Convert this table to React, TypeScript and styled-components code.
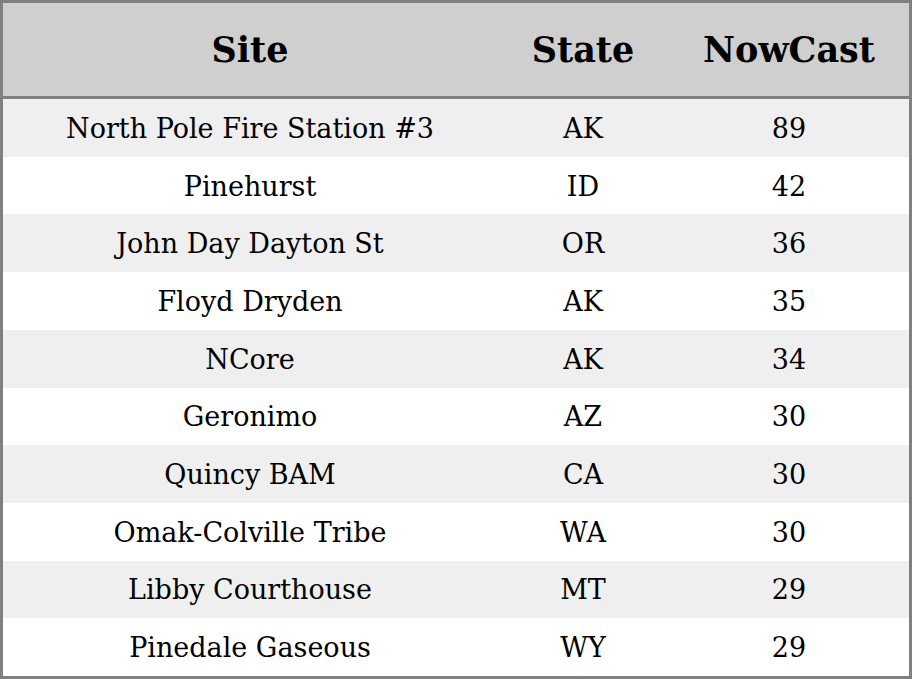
import React from "react";
import styled, { createGlobalStyle } from "styled-components";

const GlobalStyle = createGlobalStyle`
  html, body { margin: 0; padding: 0; background: #fff; }
  * { box-sizing: border-box; }
`;

const rows = [
  { site: "North Pole Fire Station #3", state: "AK", nowcast: 89 },
  { site: "Pinehurst", state: "ID", nowcast: 42 },
  { site: "John Day Dayton St", state: "OR", nowcast: 36 },
  { site: "Floyd Dryden", state: "AK", nowcast: 35 },
  { site: "NCore", state: "AK", nowcast: 34 },
  { site: "Geronimo", state: "AZ", nowcast: 30 },
  { site: "Quincy BAM", state: "CA", nowcast: 30 },
  { site: "Omak-Colville Tribe", state: "WA", nowcast: 30 },
  { site: "Libby Courthouse", state: "MT", nowcast: 29 },
  { site: "Pinedale Gaseous", state: "WY", nowcast: 29 },
];

const Frame = styled.div`
  width: 912px;
  height: 679px;
  border: 3px solid #808080;
  display: flex;
  flex-direction: column;
  font-family: "DejaVu Serif", serif;
  color: #000;
`;

const Row = styled.div<{ $striped?: boolean }>`
  display: grid;
  grid-template-columns: 494px 172px 1fr;
  align-items: center;
  flex: 1;
  padding-top: 1px;
  background: ${(p) => (p.$striped ? "#efefef" : "#fff")};
`;

const HeaderRow = styled(Row)`
  flex: 0 0 96px;
  padding-top: 0;
  background: #cfcfcf;
  border-bottom: 3px solid #808080;
  font-weight: bold;
  font-size: 35px;
`;

const Cell = styled.div`
  text-align: center;
  font-size: inherit;
`;

const BodyCell = styled(Cell)`
  font-size: 27px;
`;

export default function App() {
  return (
    <>
      <GlobalStyle />
      <Frame>
        <HeaderRow>
          <Cell>Site</Cell>
          <Cell>State</Cell>
          <Cell>NowCast</Cell>
        </HeaderRow>
        {rows.map((r, i) => (
          <Row key={r.site} $striped={i % 2 === 0}>
            <BodyCell>{r.site}</BodyCell>
            <BodyCell>{r.state}</BodyCell>
            <BodyCell>{r.nowcast}</BodyCell>
          </Row>
        ))}
      </Frame>
    </>
  );
}
